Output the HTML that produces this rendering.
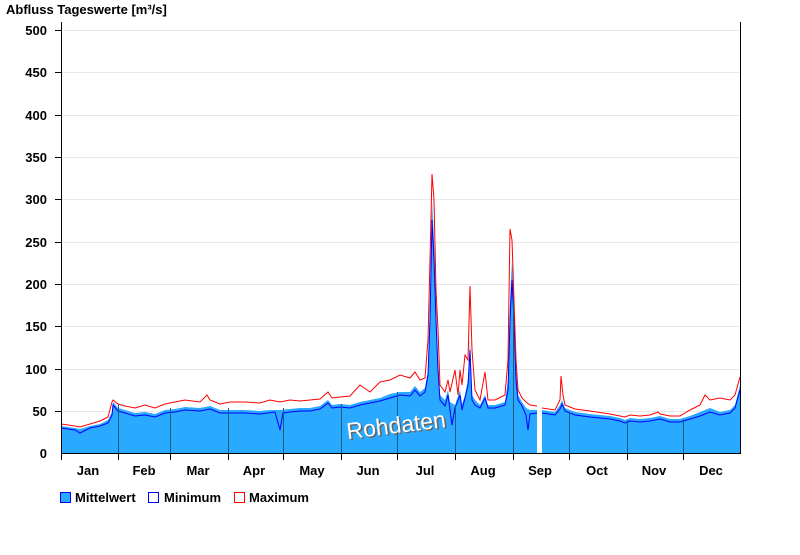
<!DOCTYPE html>
<html><head><meta charset="utf-8"><style>
body{margin:0;background:#fff;width:800px;height:550px;overflow:hidden;font-family:"Liberation Sans",Arial,sans-serif}
</style></head><body>
<svg width="800" height="550" xmlns="http://www.w3.org/2000/svg" font-family="Liberation Sans, Arial, sans-serif">
<text x="6" y="14" font-size="13" font-weight="bold" fill="#000">Abfluss Tageswerte [m³/s]</text>
<g stroke="#e8e8e8" stroke-width="1">
<line x1="61" x2="740" y1="30.5" y2="30.5"/><line x1="61" x2="740" y1="72.5" y2="72.5"/><line x1="61" x2="740" y1="115.5" y2="115.5"/><line x1="61" x2="740" y1="157.5" y2="157.5"/><line x1="61" x2="740" y1="199.5" y2="199.5"/><line x1="61" x2="740" y1="242.5" y2="242.5"/><line x1="61" x2="740" y1="284.5" y2="284.5"/><line x1="61" x2="740" y1="326.5" y2="326.5"/><line x1="61" x2="740" y1="369.5" y2="369.5"/><line x1="61" x2="740" y1="411.5" y2="411.5"/>
</g>
<g font-size="13" font-weight="bold" text-anchor="end" fill="#000">
<text x="47" y="35">500</text><text x="47" y="77">450</text><text x="47" y="120">400</text><text x="47" y="162">350</text><text x="47" y="204">300</text><text x="47" y="247">250</text><text x="47" y="289">200</text><text x="47" y="331">150</text><text x="47" y="374">100</text><text x="47" y="416">50</text><text x="47" y="458">0</text>
</g>
<g stroke="#000" stroke-width="1">
<line x1="55" x2="61" y1="30.5" y2="30.5"/><line x1="55" x2="61" y1="72.5" y2="72.5"/><line x1="55" x2="61" y1="115.5" y2="115.5"/><line x1="55" x2="61" y1="157.5" y2="157.5"/><line x1="55" x2="61" y1="199.5" y2="199.5"/><line x1="55" x2="61" y1="242.5" y2="242.5"/><line x1="55" x2="61" y1="284.5" y2="284.5"/><line x1="55" x2="61" y1="326.5" y2="326.5"/><line x1="55" x2="61" y1="369.5" y2="369.5"/><line x1="55" x2="61" y1="411.5" y2="411.5"/>
</g>
<polygon fill="#29a9ff" points="61,426 75,428 80,429 90,426 100,424 108,420 112,412 113,402 118,408 125,410 135,413 145,412 155,414 165,410 175,409 185,407 200,408 210,406 220,410 230,410 245,410 260,411 270,410 280,410 290,409 300,408 310,408 320,406 328,400 332,405 340,404 350,405 360,402 370,400 380,398 390,394 400,392 410,392 415,386 420,392 425,388 428,370 430,300 432,200 434,240 436,300 438,360 440,395 445,400 448,390 450,402 455,405 460,390 462,404 465,395 468,380 470,340 472,395 475,400 480,405 485,395 488,405 495,405 505,402 508,380 510,300 512,260 514,300 516,370 518,395 522,402 526,408 530,410 537,410 537,453 61,453"/>
<polygon fill="#29a9ff" points="542,410 555,412 560,405 562,400 565,408 575,412 590,414 610,416 620,418 625,420 630,418 640,419 650,418 660,416 670,419 680,419 690,416 700,412 710,408 720,412 730,410 735,405 740,385 740,453 542,453"/>
<polyline fill="none" stroke="#00f" stroke-width="1" points="61,428 75,430 80,433 90,428 100,426 108,423 112,415 113,405 118,411 125,413 135,416 145,415 155,417 165,413 175,412 185,410 200,411 210,409 220,413 230,413 245,413 260,414 275,412 280,430 283,413 290,412 300,411 310,411 320,409 328,403 332,408 340,407 350,408 360,405 370,403 380,401 390,398 400,395 410,396 415,390 420,396 425,392 428,375 430,320 432,220 434,260 436,320 438,370 440,400 445,406 448,395 450,410 452,425 455,408 460,395 462,410 465,398 468,385 470,350 472,400 475,405 480,408 485,398 488,408 495,408 505,405 508,390 510,320 512,280 514,320 516,380 518,400 522,406 526,415 528,430 530,414 537,413"/>
<polyline fill="none" stroke="#00f" stroke-width="1" points="542,413 555,415 560,409 562,404 565,411 575,415 590,417 610,419 620,421 625,423 630,421 640,422 650,421 660,419 670,422 680,422 690,419 700,416 710,412 720,415 730,413 735,408 740,390"/>
<polyline fill="none" stroke="#f00" stroke-width="1" points="61,424 75,426 80,427 90,424 100,421 108,417 112,402 113,400 118,404 125,406 135,408 145,405 155,408 165,404 175,402 185,400 200,402 207,395 210,400 220,404 230,402 245,402 260,403 270,400 280,402 290,400 300,401 310,400 320,399 328,392 332,398 340,397 350,396 360,385 370,392 380,382 390,380 400,375 410,378 415,372 420,380 425,378 428,340 430,260 432,174 434,200 436,290 438,330 440,385 445,392 448,380 450,392 455,370 458,395 460,370 462,385 465,355 468,360 470,286 472,350 475,390 480,400 485,372 488,400 495,400 505,395 508,360 510,229 512,240 514,300 516,360 518,390 522,398 526,402 530,405 537,406"/>
<polyline fill="none" stroke="#f00" stroke-width="1" points="542,408 555,410 560,400 561,376 563,395 565,405 575,409 590,411 610,414 620,416 625,417 630,415 640,416 650,415 658,412 660,414 670,416 680,416 690,410 700,405 705,395 710,400 720,398 730,400 735,395 740,377"/>
<g stroke="#1a5c80" stroke-width="1">
<line x1="118.5" x2="118.5" y1="404" y2="453"/><line x1="170.5" x2="170.5" y1="408" y2="453"/><line x1="228.5" x2="228.5" y1="408" y2="453"/><line x1="283.5" x2="283.5" y1="408" y2="453"/><line x1="341.5" x2="341.5" y1="404" y2="453"/><line x1="397.5" x2="397.5" y1="392" y2="453"/><line x1="455.5" x2="455.5" y1="405" y2="453"/><line x1="513.5" x2="513.5" y1="300" y2="453"/><line x1="569.5" x2="569.5" y1="412" y2="453"/><line x1="627.5" x2="627.5" y1="420" y2="453"/><line x1="683.5" x2="683.5" y1="419" y2="453"/>
</g>
<g stroke="#000" stroke-width="1">
<line x1="61.5" x2="61.5" y1="22" y2="460"/><line x1="740.5" x2="740.5" y1="22" y2="453"/><line x1="61" x2="741" y1="453.5" y2="453.5"/>
<line x1="118.5" x2="118.5" y1="453" y2="460"/><line x1="170.5" x2="170.5" y1="453" y2="460"/><line x1="228.5" x2="228.5" y1="453" y2="460"/><line x1="283.5" x2="283.5" y1="453" y2="460"/><line x1="341.5" x2="341.5" y1="453" y2="460"/><line x1="397.5" x2="397.5" y1="453" y2="460"/><line x1="455.5" x2="455.5" y1="453" y2="460"/><line x1="513.5" x2="513.5" y1="453" y2="460"/><line x1="569.5" x2="569.5" y1="453" y2="460"/><line x1="627.5" x2="627.5" y1="453" y2="460"/><line x1="683.5" x2="683.5" y1="453" y2="460"/>
</g>
<g transform="translate(397,433) rotate(-7)" font-size="23" text-anchor="middle">
<text x="1.5" y="1.5" fill="#666">Rohdaten</text>
<text x="0" y="0" fill="#fff">Rohdaten</text>
</g>
<g font-size="13" font-weight="bold" text-anchor="middle" fill="#000">
<text x="88" y="475">Jan</text><text x="144" y="475">Feb</text><text x="198" y="475">Mar</text><text x="254" y="475">Apr</text><text x="312" y="475">May</text><text x="368" y="475">Jun</text><text x="425" y="475">Jul</text><text x="483" y="475">Aug</text><text x="540" y="475">Sep</text><text x="597" y="475">Oct</text><text x="654" y="475">Nov</text><text x="711" y="475">Dec</text>
</g>
<rect x="60.5" y="492.5" width="10" height="10" fill="#29a9ff" stroke="#00f"/>
<text x="75" y="502" font-size="13" font-weight="bold">Mittelwert</text>
<rect x="148.5" y="492.5" width="10" height="10" fill="#fff" stroke="#00f"/>
<text x="164" y="502" font-size="13" font-weight="bold">Minimum</text>
<rect x="234.5" y="492.5" width="10" height="10" fill="#fff" stroke="#f00"/>
<text x="249" y="502" font-size="13" font-weight="bold">Maximum</text>
</svg>
</body></html>
